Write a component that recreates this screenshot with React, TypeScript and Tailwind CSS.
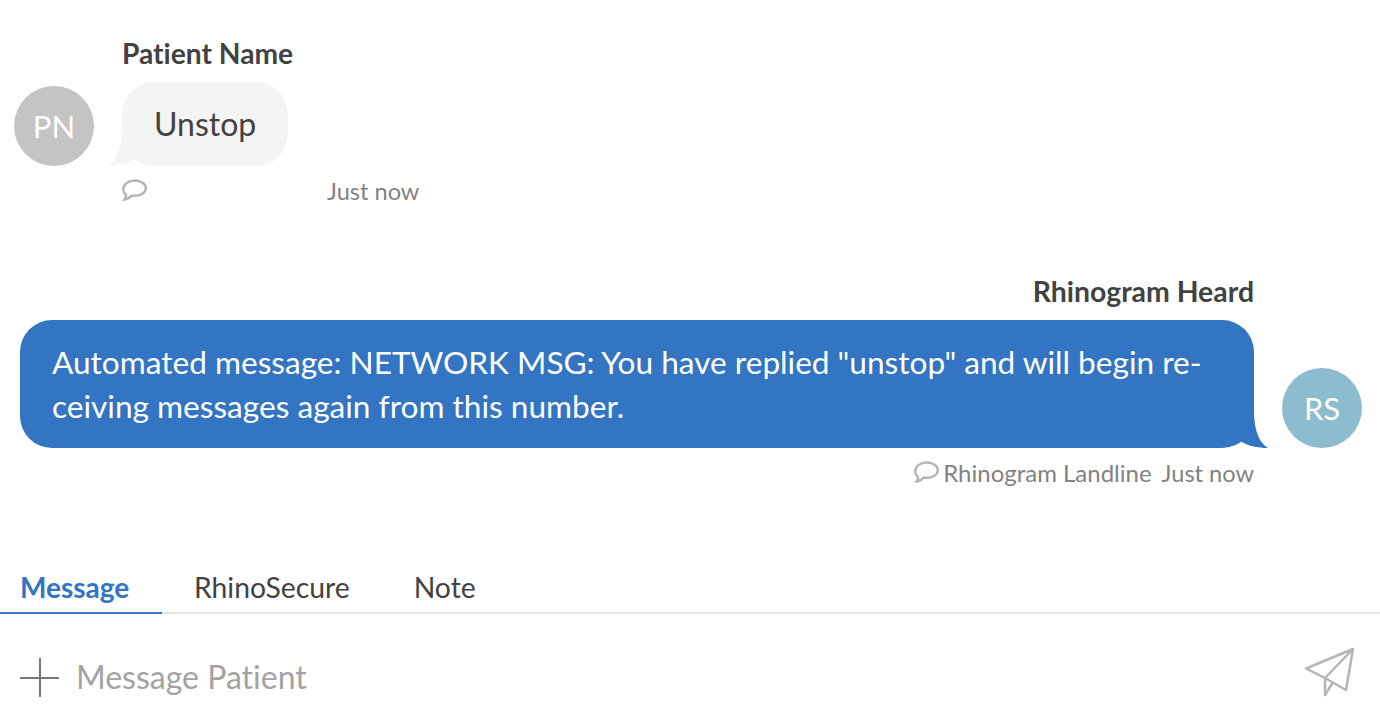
function BubbleIcon() {
  return (
    <svg className="shrink-0 -translate-y-px" width="25" height="22" viewBox="0 0 25 22" fill="none" stroke="#b5b5b5" strokeWidth="2.4">
      <path d="M2.5 20.5C3.8 18.6 4.2 17.3 4 15.8C2.3 14.4 1.2 12.7 1.2 10.4C1.2 5.4 6.1 1.5 12.5 1.5C18.9 1.5 23.8 4.8 23.8 9.2C23.8 13.6 18.9 16.8 12.5 16.8C11.5 16.8 10.5 16.7 9.6 16.5C7.8 18.8 5.5 20 2.5 20.5Z" />
    </svg>
  );
}

export default function App() {
  return (
    <div className="flex h-[726px] w-[1380px] flex-col overflow-hidden bg-white font-['Lato',sans-serif] text-[#424242] [font-variant-ligatures:none]">
      <div className="flex flex-1 flex-col px-[14px] pt-[35px]">
        {/* Patient message */}
        <div className="ml-[108px] text-[28.2px] font-bold leading-[36px]">Patient Name</div>
        <div className="mt-[11px] flex items-end">
          <div className="flex h-[80px] w-[80px] items-center justify-center rounded-full bg-[#c4c4c4] text-[31px] text-white">PN</div>
          <div className="relative ml-[28px] rounded-[32px] bg-[#f4f4f4] px-[32px] py-[20px] text-[32px] leading-[44px]">
            Unstop
            <svg className="absolute bottom-0 left-[-15px]" width="50" height="40" viewBox="0 0 50 40">
              <path d="M15 0C15 16 12 32 1 40C11 40 21 38 29 32L45 20Z" fill="#f4f4f4" />
            </svg>
          </div>
        </div>
        <div className="mt-[10px] ml-[108px] flex h-[30px] items-center text-[23.6px] leading-[30px] text-[#828282]">
          <BubbleIcon />
          <span className="ml-[180px]">Just now</span>
        </div>

        {/* Automated message */}
        <div className="mt-[67px] mr-[112px] flex justify-end text-[28.4px] font-bold leading-[36px]">Rhinogram Heard</div>
        <div className="mt-[11px] flex items-end justify-between pl-[6px] pr-[4px]">
          <div className="relative w-[1234px] rounded-[32px] bg-[#3375c3] px-[32px] py-[20px] text-[31.6px] leading-[44px] text-white">
            Automated message: NETWORK MSG: You have replied "unstop" and will begin re&shy;ceiving messages again from this number.
            <svg className="absolute bottom-0 right-[-15px]" width="50" height="40" viewBox="0 0 50 40">
              <path d="M35 0C35 16 37 32 49 40C39 40 29 38 21 33L5 20Z" fill="#3375c3" />
            </svg>
          </div>
          <div className="flex h-[80px] w-[80px] items-center justify-center rounded-full bg-[#8dbccf] text-[31px] text-white">RS</div>
        </div>
        <div className="mt-[10px] mr-[112px] flex h-[30px] items-center justify-end text-[24px] leading-[30px] text-[#828282]">
          <BubbleIcon />
          <span className="ml-[4px]">Rhinogram Landline</span>
          <span className="ml-[10px] text-[23.6px]">Just now</span>
        </div>
      </div>

      {/* Composer */}
      <div className="flex h-[40px] items-end border-b-2 border-[#e3e3e3] text-[28.3px] leading-[40px]">
        <div className="-mb-[2px] w-[162px] border-b-2 border-[#3375c3] pb-[5px] pl-[20px] text-[28px] font-bold text-[#3375c3]">Message</div>
        <div className="ml-[32px] pb-[5px]">RhinoSecure</div>
        <div className="ml-[64px] pb-[5px]">Note</div>
      </div>
      <div className="flex h-[112px] items-start justify-between px-[20px] pt-[43px]">
        <div className="flex items-center">
          <svg width="40" height="40" viewBox="0 0 40 40" stroke="#777777" strokeWidth="2">
            <path d="M20 1V40M0 21H39" />
          </svg>
          <span className="ml-[16px] text-[32px] leading-[40px] text-[#a3a3a3]">Message Patient</span>
        </div>
        <svg className="-mt-[10px] mr-[4px]" width="52" height="50" viewBox="0 0 52 50" fill="none" stroke="#b5b5b5" strokeWidth="2.5" strokeLinejoin="round">
          <path d="M49 2L2 21.5L21 31L42 43ZM49 2L21 31V48L29 35" />
        </svg>
      </div>
    </div>
  );
}
